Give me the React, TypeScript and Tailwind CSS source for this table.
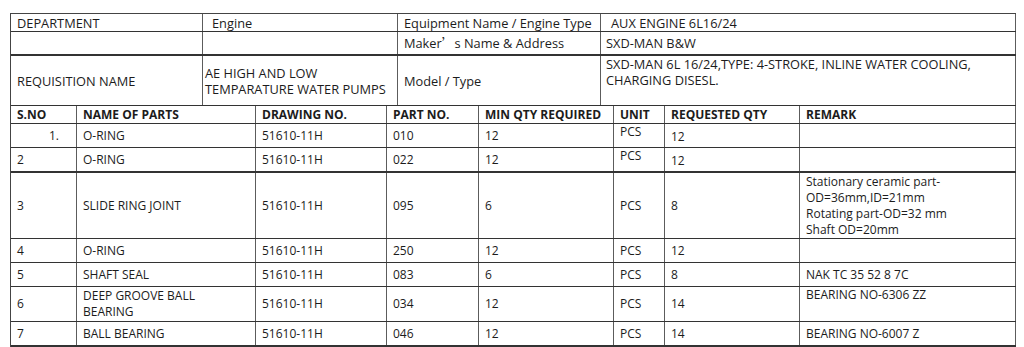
import React from "react";

type CellProps = { w: string; className?: string; children?: React.ReactNode };

function Cell({ w, className = "", children }: CellProps) {
  return (
    <div className={`${w} shrink-0 border-r border-[#5c5c5c] flex px-[6px] ${className}`}>
      {children}
    </div>
  );
}

const C1 = "w-[66px]";
const C2 = "w-[179px]";
const C3 = "w-[131px]";
const C4 = "w-[92px]";
const C5 = "w-[135px]";
const C6 = "w-[51px]";
const C7 = "w-[135px]";
const C8 = "w-[216px]";

type Row = {
  h: string;
  thick?: boolean;
  sno: React.ReactNode;
  snoCls?: string;
  name: React.ReactNode;
  drawing: string;
  part: string;
  min: string;
  unitTop?: boolean;
  req: string;
  reqCls?: string;
  remark?: React.ReactNode;
  remarkTop?: boolean;
};

const rows: Row[] = [
  { h: "h-[24px]", sno: "1.", snoCls: "pl-[38px]", name: "O-RING", drawing: "51610-11H", part: "010", min: "12", unitTop: true, req: "12", reqCls: "pt-[3px]" },
  { h: "h-[25px]", thick: true, sno: "2", name: "O-RING", drawing: "51610-11H", part: "022", min: "12", unitTop: true, req: "12", reqCls: "pt-[3px]" },
  {
    h: "h-[66px]",
    sno: "3",
    name: "SLIDE RING JOINT",
    drawing: "51610-11H",
    part: "095",
    min: "6",
    req: "8",
    remark: (
      <>
        Stationary ceramic part-
        <br />
        OD=36mm,ID=21mm
        <br />
        Rotating part-OD=32 mm
        <br />
        Shaft OD=20mm
      </>
    ),
  },
  { h: "h-[24px]", sno: "4", name: "O-RING", drawing: "51610-11H", part: "250", min: "12", req: "12" },
  { h: "h-[24px]", sno: "5", name: "SHAFT SEAL", drawing: "51610-11H", part: "083", min: "6", req: "8", remark: "NAK TC 35 52 8 7C" },
  {
    h: "h-[35px]",
    sno: "6",
    name: (
      <>
        DEEP GROOVE BALL
        <br />
        BEARING
      </>
    ),
    drawing: "51610-11H",
    part: "034",
    min: "12",
    req: "14",
    remark: "BEARING NO-6306 ZZ",
    remarkTop: true,
  },
  { h: "h-[25px]", thick: true, sno: "7", name: "BALL BEARING", drawing: "51610-11H", part: "046", min: "12", req: "14", remark: "BEARING NO-6007 Z" },
];

export default function App() {
  return (
    <div className="w-[1024px] h-[347px] bg-white overflow-hidden pt-[13px] pl-[10px]">
      <div
        className="w-[1006px] border-l border-t border-[#444] text-[12px] leading-[16px] text-[#1c1c1c]"
        style={{ fontFamily: '"Open Sans", "Noto Sans", "Noto Sans CJK SC", sans-serif' }}
      >
        {/* Row A */}
        <div className="flex h-[18px] border-b border-[#333] text-[12.8px]">
          <Cell w="w-[192px]" className="items-center">DEPARTMENT</Cell>
          <Cell w="w-[195px]" className="items-center pl-[9px]">Engine</Cell>
          <Cell w="w-[203px]" className="items-center">Equipment Name / Engine Type</Cell>
          <Cell w="w-[415px]" className="items-center pl-[10px]">AUX ENGINE 6L16/24</Cell>
        </div>
        {/* Row B */}
        <div className="flex h-[24px] border-b-2 border-[#333] text-[12.8px]">
          <Cell w="w-[192px]" />
          <Cell w="w-[195px]" />
          <Cell w="w-[203px]" className="items-center">
            Maker<span style={{ fontFamily: '"Noto Sans CJK SC", sans-serif' }}>’</span> s Name &amp; Address
          </Cell>
          <Cell w="w-[415px]" className="items-center pl-[5px]">SXD-MAN B&amp;W</Cell>
        </div>
        {/* Row C */}
        <div className="flex h-[50px] border-b border-[#333] text-[12.8px]">
          <Cell w="w-[192px]" className="items-center">REQUISITION NAME</Cell>
          <Cell w="w-[195px]" className="items-center pl-[2px]">
            <div>
              AE HIGH AND LOW
              <br />
              TEMPARATURE WATER PUMPS
            </div>
          </Cell>
          <Cell w="w-[203px]" className="items-center">Model / Type</Cell>
          <Cell w="w-[415px]" className="items-start pl-[5px]">
            <div>
              SXD-MAN 6L 16/24,TYPE: 4-STROKE, INLINE WATER COOLING,
              <br />
              CHARGING DISESL.
            </div>
          </Cell>
        </div>
        {/* Header */}
        <div className="flex h-[18px] border-b border-[#333] font-bold">
          <Cell w={C1} className="items-center">S.NO</Cell>
          <Cell w={C2} className="items-center">NAME OF PARTS</Cell>
          <Cell w={C3} className="items-center">DRAWING NO.</Cell>
          <Cell w={C4} className="items-center">PART NO.</Cell>
          <Cell w={C5} className="items-center">MIN QTY REQUIRED</Cell>
          <Cell w={C6} className="items-center">UNIT</Cell>
          <Cell w={C7} className="items-center">REQUESTED QTY</Cell>
          <Cell w={C8} className="items-center">REMARK</Cell>
        </div>
        {rows.map((r, i) => (
          <div key={i} className={`flex ${r.h} ${r.thick ? "border-b-2" : "border-b"} border-[#333]`}>
            <Cell w={C1} className={`items-center ${r.snoCls ?? ""}`}>{r.sno}</Cell>
            <Cell w={C2} className="items-center">
              <div>{r.name}</div>
            </Cell>
            <Cell w={C3} className="items-center">{r.drawing}</Cell>
            <Cell w={C4} className="items-center">{r.part}</Cell>
            <Cell w={C5} className="items-center">{r.min}</Cell>
            <Cell w={C6} className={r.unitTop ? "items-start pt-0" : "items-center"}>PCS</Cell>
            <Cell w={C7} className={`items-center ${r.reqCls ?? ""}`}>{r.req}</Cell>
            <Cell w={C8} className={r.remarkTop ? "items-start" : "items-center"}>
              <div>{r.remark}</div>
            </Cell>
          </div>
        ))}
      </div>
    </div>
  );
}
